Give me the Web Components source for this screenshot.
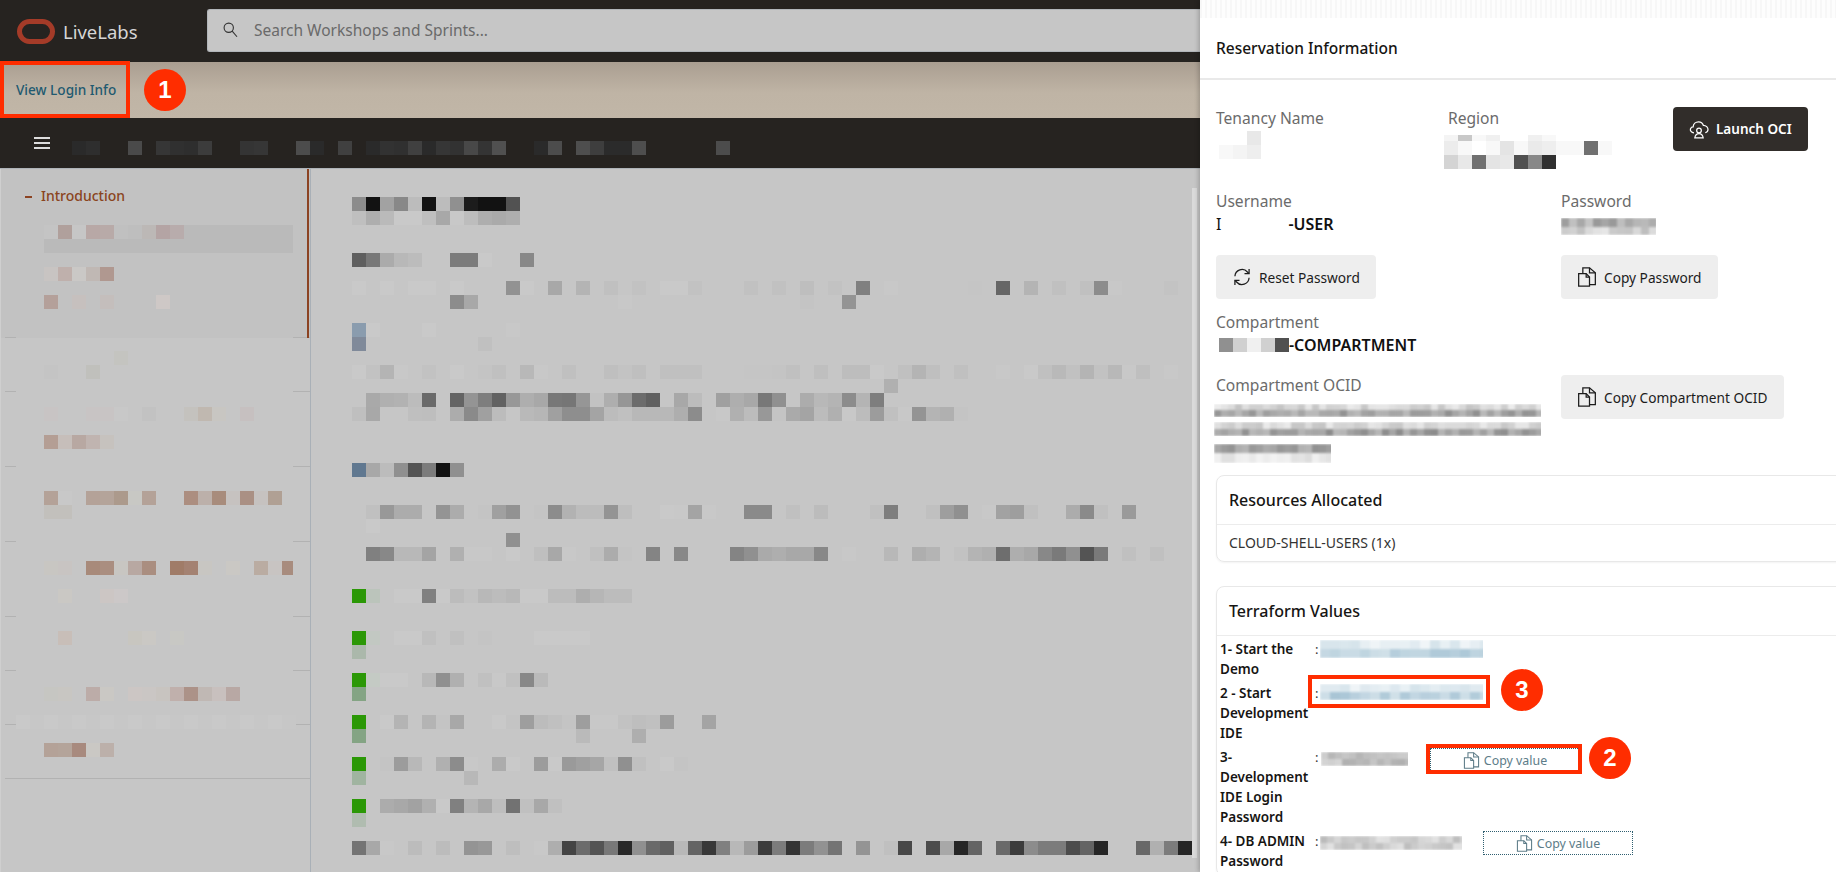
<!DOCTYPE html>
<html lang="en">
<head>
<meta charset="utf-8">
<title>LiveLabs</title>
<style>
  html, body { margin: 0; height: 872px; overflow: hidden; background: #c6c6c6; }
  body { font-family: "Noto Sans", "Liberation Sans", sans-serif; }
</style>
</head>
<body>
<ll-page></ll-page>
<script>
const ICONS = {
  search: '<circle cx="9" cy="9" r="6.2"/><path d="M13.6 13.6 20 21"/>',
  copy: '<path d="M2 8h9l4 4v11H2z"/><path d="M11 8v4h4"/><path d="M7 8V1h8l7 6v14h-7"/><path d="M15 1v6h7"/>',
  reset: '<path d="M3.500 11A8.500 8.500 0 0 1 18.500 6l2 2"/><path d="M20.500 2.500v5.500H15"/><path d="M20.500 13A8.500 8.500 0 0 1 5.500 18l-2-2"/><path d="M3.500 21.500V16H9"/>',
  cloud: '<path d="M6 16.500C2.800 16.500 1 14 1.800 11.600 2.500 10 3.800 9.400 5 9.400 5.200 6 8 3.300 11.500 3.300c3 0 5 2 5.700 4.200 3.300 0 5.800 2.500 5.600 5.500-.1 2-1.800 3.200-3.300 3.500"/><circle cx="12" cy="13.800" r="2.800"/><path d="M7 22.500c.5-3.400 2.500-5 5-5s4.500 1.600 5 5z"/>'
};

function icon(name, size) {
  return `<svg width="${size}" height="${size}" viewBox="0 0 24 24" fill="none" stroke="currentColor" stroke-width="1.500">${ICONS[name]}</svg>`;
}

// pixelated (redacted) text, one square per cell
// rows = "row col=tok tok tok col=tok; row ..."
class PixelGrid extends HTMLElement {
  connectedCallback() {
    const cols = this.getAttribute('cols') || 60;
    const root = this.attachShadow({mode: 'open'});
    let cells = '';
    this.getAttribute('rows').split(';').forEach(line => {
      const parts = line.trim().split(/\s+/);
      const row = +parts.shift() + 1;
      let col = 1;
      parts.forEach(tok => {
        if (tok.includes('=')) {
          const pair = tok.split('=');
          col = +pair[0] + 1;
          tok = pair[1];
        }
        const colour = tok === 'g' ? '#2b9806' : tok.length === 2 ? '#' + tok + tok + tok : '#' + tok;
        cells += `<i style="grid-area:${row}/${col};background:${colour}"></i>`;
        col++;
      });
    });
    root.innerHTML = `
      <style>
        :host { display: grid; grid-template-columns: repeat(${cols}, 14px); grid-auto-rows: 14px; width: max-content; position: relative; z-index: 1; }
        i { display: block; }
      </style>
      <slot></slot>${cells}`;
  }
}

// small blurry redaction, rows = "height:min-max, ..."
class NoiseBar extends HTMLElement {
  connectedCallback() {
    const width = +this.getAttribute('width');
    const cell = +this.getAttribute('cell') || 7;
    const tint = this.getAttribute('tint') || '85,85,85';
    let seed = +this.getAttribute('seed') || 7;
    const random = () => {
      seed = (seed * 16807) % 2147483647;
      return (seed % 1000) / 1000;
    };
    let html = '';
    this.getAttribute('rows').split(',').forEach(spec => {
      const [height, range] = spec.split(':');
      const [min, max] = range.split('-').map(Number);
      let cells = '';
      for (let x = 0; x < width; x += cell) {
        const alpha = min + (max - min) * random();
        cells += `<i style="width:${cell}px;background:rgba(${tint},${alpha.toFixed(2)})"></i>`;
      }
      html += `<div style="height:${height}px">${cells}</div>`;
    });
    this.attachShadow({mode: 'open'}).innerHTML = `
      <style>
        :host { display: block; width: ${width}px; overflow: hidden; }
        .wrap { filter: blur(.8px); }
        div div { display: flex; }
        i { display: block; flex: none; }
      </style>
      <div class="wrap">${html}</div>`;
  }
}

class NumberBadge extends HTMLElement {
  constructor() {
    super();
    this.attachShadow({mode: 'open'}).innerHTML = `
      <style>
        :host {
          display: flex; align-items: center; justify-content: center;
          width: 42px; height: 42px; border-radius: 50%; flex: none;
          background: #ff2d00; color: #fff;
          font: bold 24px "Liberation Sans", Arial, sans-serif;
        }
      </style>
      <slot></slot>`;
  }
}

class LlHeader extends HTMLElement {
  constructor() {
    super();
    this.attachShadow({mode: 'open'}).innerHTML = `
      <style>
        :host { display: flex; align-items: center; height: 62px; background: #262320; padding-left: 17px; box-sizing: border-box; }
        .name { color: #d6d6d6; font-size: 18.500px; margin-left: 8px; width: 144px; }
        .search {
          display: flex; align-items: center; flex: 1; height: 43px; margin-top: -2px; box-sizing: border-box;
          background: #c6c6c6; border: 1px solid #b2b6ba; border-right: 0; border-radius: 3px 0 0 3px;
          color: #6a6a6a; font-size: 15.500px; padding-left: 14px;
        }
        .search svg { margin-right: 14px; color: #333; }
      </style>
      <svg width="38" height="25" viewBox="0 0 38 25"><rect x="2.500" y="2.500" width="33" height="20" rx="10" fill="none" stroke="#a43b28" stroke-width="5"/></svg>
      <span class="name">LiveLabs</span>
      <div class="search">${icon('search', 18)}<span>Search Workshops and Sprints...</span></div>`;
  }
}

class LlBanner extends HTMLElement {
  constructor() {
    super();
    this.attachShadow({mode: 'open'}).innerHTML = `
      <style>
        :host { display: flex; align-items: center; height: 56px; background: linear-gradient(#aa9e91, #bfb4a5 55%, #c1b6a7); }
        .login {
          width: 130px; height: 57px; margin-top: -1px; box-sizing: border-box; border: 4px solid #ff2d00;
          display: flex; align-items: center; padding-left: 12px;
          color: #1f5a70; font-size: 13.600px; font-weight: 500; white-space: nowrap;
        }
        number-badge { margin-left: 14px; }
      </style>
      <div class="login">View Login Info</div>
      <number-badge>1</number-badge>`;
  }
}

class LlCrumbs extends HTMLElement {
  constructor() {
    super();
    this.attachShadow({mode: 'open'}).innerHTML = `
      <style>
        :host { display: flex; height: 50px; background: #262320; padding: 19px 0 0 34px; box-sizing: border-box; }
        .burger { width: 16px; height: 12px; margin-right: 22px; border-top: 2px solid #ddd; border-bottom: 2px solid #ddd; box-sizing: border-box; position: relative; }
        .burger::after { content: ""; position: absolute; left: 0; right: 0; top: 3px; height: 2px; background: #ddd; }
        pixel-grid { margin-top: 4px; }
      </style>
      <div class="burger"></div>
      <pixel-grid cols="47" rows="0 0=2a 2e 4=4a 6=36 30 2e 3c 12=34 36 16=4c 2a 19=40 21=2a 32 30 40 2a 36 32 48 34 50 33=2a 4c 36=4e 3e 2b 2b 40=4e 46=4c"></pixel-grid>`;
  }
}

class TocItem extends HTMLElement {
  constructor() {
    super();
    this.attachShadow({mode: 'open'}).innerHTML = `
      <style>
        :host { display: flow-root; position: relative; box-sizing: border-box; padding-left: 16px; }
        :host([active]) { background: #c2c2c2; }
        :host([active])::after { content: ""; position: absolute; right: 1px; top: 0; bottom: 0; width: 2px; background: #8c4322; }
        :host::before, .tick { content: ""; position: absolute; bottom: 0; height: 1px; background: #b2b2b2; }
        :host::before { left: 5px; width: 11px; }
        .tick { right: 0; width: 17px; }
        :host([full]) .tick { left: 5px; width: auto; }
      </style>
      <slot></slot>
      <div class="tick"></div>`;
  }
}

class LlSidebar extends HTMLElement {
  constructor() {
    super();
    this.attachShadow({mode: 'open'}).innerHTML = `
      <style>
        :host { display: block; width: 311px; flex: none; box-sizing: border-box; border-right: 1px solid #a9b0b7; border-left: 1px solid #cfcfcf; overflow: hidden; }
        toc-item { margin-left: -1px; }
        .intro { display: flex; align-items: center; height: 56px; padding: 0 0 4px 9px; box-sizing: border-box; color: #8a4420; font-size: 14px; font-weight: 500; }
        .intro b { width: 7px; height: 2px; background: #8c4322; margin: 4px 9px 0 0; }
        .wrap { width: 277px; overflow: hidden; position: relative; }
        .pick { position: absolute; left: 28px; top: 0; width: 249px; height: 28px; background: #bababa; }
      </style>
      <toc-item active style="height:169px">
        <div class="intro"><b></b>Introduction</div>
        <div class="wrap">
          <div class="pick"></div>
          <pixel-grid cols="20" rows="0 2=c4 b0a09c c6 b8a8a6 b8aaa8 c0 be bcb8b6 b4a4a4 b8acac; 3 2=c8c4c2 bfb0ac cac8c6 c0b8b4 b09890; 5 2=b4a09a 4=c6c0be 6=c4bebc 10=cec8c6"></pixel-grid>
        </div>
      </toc-item>
      <toc-item style="height:54px"><pixel-grid style="margin-top:13px" cols="20" rows="0 7=c4c4c0; 1 2=c4 5=c0c0bc"></pixel-grid></toc-item>
      <toc-item style="height:75px"><pixel-grid style="margin-top:15px" cols="20" rows="0 2=c8c4c4 5=c8c4c4 c8c4c4 c8 9=c2 12=c4c2be c0b8b0 c8c6c2 16=c6c0c0; 2 2=b49e94 c6beba b8a8a2 c0b4b0 c6c2be"></pixel-grid></toc-item>
      <toc-item style="height:75px"><pixel-grid style="margin-top:24px" cols="20" rows="0 2=b4a298 c8 5=b4a298 b4a49a ac9a8c c8c8c4 b4a298 12=ac8e80 bcb0aa a88c7c c6c2c0 aa9084 c6c2c0 b0a094; 1 2=c2c0bc c2c0bc"></pixel-grid></toc-item>
      <toc-item style="height:75px"><pixel-grid style="margin-top:19px;width:277px;overflow:hidden" cols="20" rows="0 2=c8c6c2 c8c4c2 5=a88a7a aa8e80 c8c6c2 b8a8a2 aa8e80 11=a07c68 a48272 c8c6c2 15=cac8c4 17=baaca2 c8c4c2 a88c7e; 2 3=cac8c4 6=ccc6c4 ccc8c8"></pixel-grid></toc-item>
      <toc-item style="height:54px"><pixel-grid style="margin-top:14px" cols="20" rows="0 3=c8beb8 8=c8c6c0 cac8c4 11=c8c8c4"></pixel-grid></toc-item>
      <toc-item style="height:54px"><pixel-grid style="margin-top:16px" cols="20" rows="0 2=c6c6c2 c8c6c2 5=bcaca8 cac8c4 8=ccc6c4 cac6c4 c8c4c0 c0b0ac ac9288 c0b8b4 c8c0be b8a8a4; 2 0=c9 c7 c9 c7 c9 c7 c9 c7 c9 c7 c9 c7 c9 c7 c9 c7 c9 c7 c9 c7"></pixel-grid></toc-item>
      <toc-item full style="height:54px"><pixel-grid style="margin-top:18px" cols="20" rows="0 2=b4a298 b4a49a a88a7e cac8c4 bcb0aa"></pixel-grid></toc-item>`;
  }
}

class LlArticle extends HTMLElement {
  constructor() {
    super();
    this.attachShadow({mode: 'open'}).innerHTML = `
      <style>
        :host { display: block; flex: 1; position: relative; overflow: hidden; padding: 28px 0 0 41px; box-sizing: border-box; }
        .scroll { position: absolute; left: 881px; top: 19px; width: 5px; height: 670px; background: #dadada; }
      </style>
      <pixel-grid cols="60" rows="
        0 0=8c 12 a2 88 bc 12 bc 90 1c 12 12 52;
        1 0=bf ae ba c9 c9 bf a8 c8 bd ae aa ae;
        4 0=5f 78 ab b8 bc c6 7=7c 7c c9 12=88;
        6 0=c9 2=c9 4=c9 c9 7=c9 11=92 c9 14=a8 16=b4 18=c0 20=c2 22=c9 c9 c2 28=c1 30=c1 32=be 34=c2 36=80 38=c8 44=c5 46=66 48=b4 50=c0 52=c0 8c c8 58=c3;
        7 7=8c a8 19=c8 32=c4 35=94;
        9 0=8a9cae c9 5=c9 11=c8;
        10 0=808a9a 9=c0;
        12 0=c9 c2 b4 c8 5=c2 7=c9 9=c4 c0 12=b8 c8 15=c0 18=bf c3 bf 22=c0 c0 c0 28=c5 c5 c4 c0 c6 bf 35=bd bd c9 39=c0 b4 bf 43=c0 46=c8 48=c9 c0 b9 c1 b4 c2 b8 c8 bf 58=c8;
        13 38=b0;
        14 1=a9 b0 b2 bc 6a 7=64 94 7e 62 98 ae a8 78 76 96 c2 ae 96 6c 60 23=a8 bc 26=a0 ae a8 78 90 32=ac b8 b4 8c b4 7e;
        15 0=bf a8 3=c6 bf be 7=ac 8a a0 bc 12=b9 b6 a0 8e 8e a4 bc c0 b8 b8 b8 ae 8c 26=c8 b0 bc 98 c4 aa a4 bc b0 c8 bc 9c c0 c8 94 b4 b0 c4;
        19 0=607890 a8 bc 90 54 7c 12 90;
        22 1=c0 98 ac ac 6=94 ac 9=c4 a0 92 13=c4 8c b2 bc bc 94 be 22=c9 c8 a4 c8 28=8a 8a 31=c0 33=bc 37=c0 7e 41=c0 9e 90 45=c8 a2 9e c0 51=ac 8a c0 55=9a;
        23 1=c9;
        24 11=90;
        25 1=80 88 b8 b8 a4 7=b0 c8 c8 11=c9 13=bf a8 c8 17=c0 ac c4 21=84 23=88 27=84 90 aa ae a8 a8 88 35=c8 38=b8 40=ae b4 43=c2 b4 b0 6e ae a8 88 7a 90 54 7a 55=c0 57=c0;
        28 0=g bbc4bb 3=c9 c9 80 c9 bc c2 b8 bc b8 c9 c9 bc bc ae b6 bc bc;
        31 0=g c2c8c2 3=c9 c9 c0 7=c0 9=c4 11=c6 13=c9 c9 c9 c9;
        32 0=abb8ab;
        34 0=g c4cac4 c9 c9 5=b8 90 b0 9=c0 c8 c0 88 ba;
        35 0=84a484;
        37 0=g 2=c9 b4 5=b4 c4 a8 10=c9 c4 9e bc c0 c4 9e c8 c8 c2 be c0 9c 25=a4;
        38 0=84a484 16=ba 20=ae;
        40 0=g 2=c4 9c b8 6=b0 8c c8 10=ac c9 13=9c c9 9a a0 a6 c0 90 c0 22=c9 c4;
        41 0=a0b4a0 8=b8;
        43 0=g 2=ac a8 a2 b0 c9 80 b4 a8 be 72 c0 a8 c0;
        44 0=b0bcb0;
        46 0=74 a8 c8 4=bc 6=bc 8=94 98 11=be 13=c8 ae 44 6c 54 78 28 90 6a 60 b8 64 38 80 b8 9c 3c 7c 34 7c 92 74 36=94 38=c0 48 41=4c a8 26 64 46=6a 3c 8c 7c 7c 4c 64 26 56=68 b0 7c 26"></pixel-grid>
      <div class="scroll"></div>`;
  }
}

class LlWorkspace extends HTMLElement {
  constructor() {
    super();
    this.attachShadow({mode: 'open'}).innerHTML = `
      <style>
        :host { display: flex; flex-direction: column; width: 1200px; flex: none; height: 872px; overflow: hidden; background: #c6c6c6; }
        .body { display: flex; flex: 1; min-height: 0; border-top: 1px solid #aeb3b8; }
      </style>
      <ll-header></ll-header>
      <ll-banner></ll-banner>
      <ll-crumbs></ll-crumbs>
      <div class="body"><ll-sidebar></ll-sidebar><ll-article></ll-article></div>`;
  }
}

class IconButton extends HTMLElement {
  connectedCallback() {
    const size = this.hasAttribute('dotted') ? 17 : 20;
    this.attachShadow({mode: 'open'}).innerHTML = `
      <style>
        :host { display: inline-flex; align-items: center; gap: 7px; height: 44px; padding: 0 16px; box-sizing: border-box; border-radius: 4px; background: #eee; color: #1c1c1c; font-size: 13.700px; white-space: nowrap; width: max-content; }
        :host([dark]) { background: #312d2a; color: #fff; font-weight: 600; font-size: 13.500px; }
        :host([dotted]) { height: 24px; width: 150px; justify-content: center; gap: 4px; padding: 0; border-radius: 0; background: #fff; color: #5d7c88; border: 1px dotted #2f5f70; font-size: 12.400px; }
      </style>
      ${icon(this.getAttribute('icon'), size)}<slot></slot>`;
  }
}

class InfoField extends HTMLElement {
  constructor() {
    super();
    this.attachShadow({mode: 'open'}).innerHTML = `
      <style>
        :host { display: block; }
        .label { color: #6b6b6b; font-size: 15.600px; line-height: 22px; }
        .value { color: #111; font-size: 16px; font-weight: 600; line-height: 22px; margin-top: 1px; white-space: nowrap; display: flex; align-items: center; }
      </style>
      <div class="label"></div>
      <div class="value"><slot></slot></div>`;
  }
  connectedCallback() {
    this.shadowRoot.querySelector('.label').textContent = this.getAttribute('label');
  }
}

class InfoCard extends HTMLElement {
  constructor() {
    super();
    this.attachShadow({mode: 'open'}).innerHTML = `
      <style>
        :host { display: block; width: 640px; box-sizing: border-box; border: 1px solid #e8e8e8; border-radius: 8px; box-shadow: 0 1px 2px rgba(0,0,0,.05); }
        .title { display: flex; align-items: center; height: 48px; padding-left: 12px; border-bottom: 1px solid #ececec; color: #161513; font-size: 16px; font-weight: 500; }
      </style>
      <div class="title"></div>
      <slot></slot>`;
  }
  connectedCallback() {
    this.shadowRoot.querySelector('.title').textContent = this.getAttribute('title');
  }
}

class TerraformRow extends HTMLElement {
  constructor() {
    super();
    this.attachShadow({mode: 'open'}).innerHTML = `
      <style>
        :host { display: flex; margin-bottom: 4px; }
        .name { width: 95px; flex: none; color: #161513; font-size: 13.500px; font-weight: 600; line-height: 20px; }
        .colon { width: 5px; flex: none; color: #333; font-size: 13px; line-height: 20px; }
        .val { display: flex; align-items: flex-start; }
      </style>
      <div class="name"></div><div class="colon">:</div>
      <div class="val"><slot></slot></div>`;
  }
  connectedCallback() {
    this.shadowRoot.querySelector('.name').innerHTML = this.getAttribute('name').split('|').join('<br>');
  }
}

class LlPanel extends HTMLElement {
  constructor() {
    super();
    this.attachShadow({mode: 'open'}).innerHTML = `
      <style>
        :host { display: block; width: 636px; flex: none; height: 872px; overflow: hidden; background: #fff; box-shadow: -2px 0 4px rgba(0,0,0,.18); position: relative; }
        .strip { height: 18px; background: repeating-linear-gradient(90deg, #f7f7f7 0 2px, #fdfdfd 2px 5px); }
        h2 { margin: 0; height: 62px; box-sizing: border-box; padding: 17px 0 0 16px; font-size: 15.500px; line-height: 26px; font-weight: 500; color: #161513; border-bottom: 2px solid #e9e9e9; }
        .content { padding: 27px 0 0 16px; }
        .top { display: grid; grid-template-columns: 232px 225px 136px; height: 83px; }
        .pair { display: grid; grid-template-columns: 345px 1fr; }
        .first { height: 65px; }
        .actions { height: 44px; margin-bottom: 12px; }
        .ocid { height: 101px; }
        .ocid noise-bar { margin: 0 0 5px -2px; }
        .ocid noise-bar + noise-bar + noise-bar { margin-top: 8px; }
        .ocid-bars { margin-top: 7px; }
        .ocid icon-button { margin-top: 1px; }
        info-card { margin-bottom: 24px; }
        .res { padding: 8px 12px; font-size: 14px; line-height: 20px; color: #333; }
        .rows { padding: 3px 0 0 3px; }
        .outline { position: relative; }
        .frame { position: absolute; border: 4px solid #ff2d00; box-sizing: border-box; }
        number-badge { position: absolute; }
        .gap-a { margin-left: 22px; margin-top: 1px; }
        .gap-b { margin-left: 21px; }
      </style>
      <div class="strip"></div>
      <h2>Reservation Information</h2>
      <div class="content">
        <div class="top">
          <info-field label="Tenancy Name"><pixel-grid cols="3" style="margin:1px 0 0 3px" rows="0 2=e8; 1 0=f8 f4 ee"></pixel-grid></info-field>
          <info-field label="Region"><pixel-grid cols="12" style="margin:-3px 0 0 -4px;clip-path:inset(8px 0 0 0)" rows="0 0=f4 c8 f8 f0 6=f0 f8; 1 0=ec f8 ff f8 e4 f8 ea ee f8 f8 70 f8; 2 0=d4 e8 70 e4 e8 50 88 30"></pixel-grid></info-field>
          <icon-button dark icon="cloud">Launch OCI</icon-button>
        </div>
        <div class="pair first">
          <info-field label="Username">
            <span style="font-weight:400">I</span><span style="margin-left:67px">-USER</span>
          </info-field>
          <info-field label="Password"><noise-bar style="margin-top:5px" width="95" cell="8" seed="11" rows="9:.35-.6,8:.15-.4"></noise-bar></info-field>
        </div>
        <div class="pair actions">
          <icon-button icon="reset">Reset Password</icon-button>
          <icon-button icon="copy">Copy Password</icon-button>
        </div>
        <info-field label="Compartment" style="height:63px">
          <pixel-grid cols="5" style="margin-left:3px;flex:none" rows="0 0=90 d0 f0 d0 50"></pixel-grid><span>-COMPARTMENT</span>
        </info-field>
        <div class="pair ocid">
          <div>
            <info-field label="Compartment OCID"></info-field>
            <div class="ocid-bars">
              <noise-bar width="327" seed="5" rows="6:.1-.35,7:.4-.65"></noise-bar>
              <noise-bar width="327" seed="9" rows="7:.12-.35,7:.4-.7"></noise-bar>
              <noise-bar width="117" seed="3" rows="9:.4-.65,10:.06-.2"></noise-bar>
            </div>
          </div>
          <icon-button icon="copy">Copy Compartment OCID</icon-button>
        </div>
        <info-card title="Resources Allocated"><div class="res">CLOUD-SHELL-USERS (1x)</div></info-card>
        <info-card title="Terraform Values">
          <div class="rows">
            <terraform-row name="1- Start the|Demo">
              <noise-bar style="margin-top:1px" width="163" cell="10" seed="21" tint="120,165,190" rows="9:.1-.3,9:.35-.6"></noise-bar>
            </terraform-row>
            <terraform-row name="2 - Start|Development|IDE">
              <div class="outline">
                <noise-bar style="margin-top:1px" width="163" cell="10" seed="33" tint="120,165,190" rows="8:.12-.3,8:.35-.65"></noise-bar>
                <div class="frame" style="left:-12px;top:-8px;width:182px;height:33px"></div>
                <number-badge style="left:181px;top:-14px">3</number-badge>
              </div>
            </terraform-row>
            <terraform-row name="3-|Development|IDE Login|Password">
              <noise-bar style="margin-top:5px;margin-left:1px" width="87" seed="41" tint="120,120,120" rows="7:.35-.55,7:.3-.6"></noise-bar>
              <div class="outline gap-a">
                <icon-button dotted icon="copy">Copy value</icon-button>
                <div class="frame" style="left:-4px;top:-4px;width:156px;height:30px"></div>
                <number-badge style="left:159px;top:-11px">2</number-badge>
              </div>
            </terraform-row>
            <terraform-row name="4- DB ADMIN|Password">
              <noise-bar style="margin-top:5px" width="142" seed="57" tint="120,120,120" rows="7:.2-.5,7:.2-.5"></noise-bar>
              <icon-button dotted class="gap-b" icon="copy">Copy value</icon-button>
            </terraform-row>
          </div>
        </info-card>
      </div>`;
  }
}

class LlPage extends HTMLElement {
  constructor() {
    super();
    this.attachShadow({mode: 'open'}).innerHTML = `
      <style>:host { display: flex; width: 1836px; height: 872px; overflow: hidden; }</style>
      <ll-workspace></ll-workspace>
      <ll-panel></ll-panel>`;
  }
}

customElements.define('pixel-grid', PixelGrid);
customElements.define('noise-bar', NoiseBar);
customElements.define('number-badge', NumberBadge);
customElements.define('ll-header', LlHeader);
customElements.define('ll-banner', LlBanner);
customElements.define('ll-crumbs', LlCrumbs);
customElements.define('toc-item', TocItem);
customElements.define('ll-sidebar', LlSidebar);
customElements.define('ll-article', LlArticle);
customElements.define('ll-workspace', LlWorkspace);
customElements.define('icon-button', IconButton);
customElements.define('info-field', InfoField);
customElements.define('info-card', InfoCard);
customElements.define('terraform-row', TerraformRow);
customElements.define('ll-panel', LlPanel);
customElements.define('ll-page', LlPage);
</script>
</body>
</html>
